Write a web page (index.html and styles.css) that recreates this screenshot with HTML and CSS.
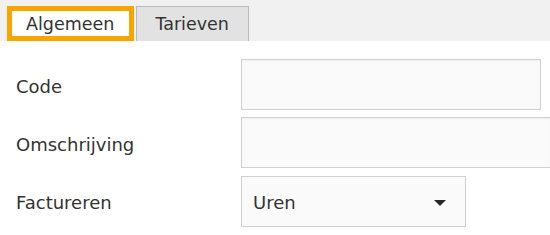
FILE: index.html
```html
<!DOCTYPE html>
<html>
	<head>
		<meta charset='utf-8'>
		<title>Artikel</title>
		<link rel="stylesheet" href="styles.css">
	</head>
	<body>
		<nav class='tabs'>
			<button class='tab active'>Algemeen</button>
			<button class='tab'>Tarieven</button>
		</nav>
		<main class='form'>
			<div class='row'>
				<label for='code'>Code</label>
				<input id='code' type='text' class='field'>
			</div>
			<div class='row'>
				<label for='omschrijving'>Omschrijving</label>
				<input id='omschrijving' type='text' class='field wide'>
			</div>
			<div class='row'>
				<label for='factureren'>Factureren</label>
				<div class='select'>
					<span>Uren</span>
					<span class='caret'></span>
				</div>
			</div>
		</main>
	</body>
</html>
```
FILE: styles.css
```css
:root {
	--text: rgb(51, 51, 51);
	--bar: rgb(241, 241, 241);
	--tab: rgb(226, 226, 226);
	--tab-border: rgb(187, 187, 187);
	--orange: rgb(247, 166, 0);
	--field: rgb(250, 250, 250);
	--field-border: rgb(208, 208, 208);
}
html, body {
	margin: 0;
	padding: 0;
	overflow: hidden;
	background-color: #fff;
	color: var(--text);
	font-family: Verdana, "DejaVu Sans", sans-serif;
	font-size: 18px;
}
.tabs {
	display: flex;
	align-items: flex-end;
	gap: 2px;
	height: 41px;
	padding: 0 7px;
	background-color: var(--bar);
	box-sizing: border-box;
}
.tab {
	height: 35px;
	padding: 0 19px 0 18px;
	border: 1px solid var(--tab-border);
	border-bottom: 0;
	background-color: var(--tab);
	color: var(--text);
	font-family: inherit;
	font-size: 17.5px;
	box-sizing: border-box;
	margin: 0;
}
.tab.active {
	background-color: #fff;
	border: 5px solid var(--orange);
	padding: 0 15px 0 14px;
}
.form {
	padding: 18px 0 0 16px;
}
.row {
	display: flex;
	align-items: center;
	margin-bottom: 7px;
}
label {
	width: 225px;
	flex: none;
	padding-top: 3px;
}
.field {
	width: 300px;
	height: 51px;
	flex: none;
	box-sizing: border-box;
	border: 1px solid var(--field-border);
	background-color: var(--field);
	box-shadow: inset 0 1px 2px rgba(0, 0, 0, 0.04);
	margin: 0;
	font-family: inherit;
	font-size: 18px;
}
.field.wide {
	flex: 1;
	width: auto;
	min-width: 0;
	border-right: 0;
}
.select {
	display: flex;
	align-items: center;
	justify-content: space-between;
	width: 225px;
	height: 51px;
	box-sizing: border-box;
	padding: 2px 19px 0 11px;
	border: 1px solid var(--field-border);
	background-color: var(--field);
	margin-top: 1px;
}
.caret {
	width: 0;
	height: 0;
	border-left: 6px solid transparent;
	border-right: 6px solid transparent;
	border-top: 6px solid rgb(40, 40, 40);
}
```
